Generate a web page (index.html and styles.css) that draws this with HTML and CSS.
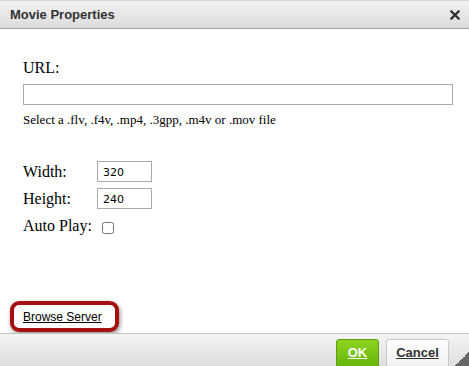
FILE: index.html
```html
<!DOCTYPE html>
<html lang="en">
<head>
    <meta charset="UTF-8">
    <meta name="viewport" content="width=device-width, initial-scale=1.0">
    <title>Movie Properties</title>
    <link rel="stylesheet" href="styles.css">
</head>
<body>
    <div class="dialog">
        <div class="titlebar">
            <span class="title">Movie Properties</span>
            <a href="#" class="close" title="Close">
                <svg width="10" height="10" viewBox="0 0 10 10">
                    <path d="M1.5 1.5 L8.5 8.5 M8.5 1.5 L1.5 8.5" stroke="#333" stroke-width="2.4" stroke-linecap="square"/>
                </svg>
            </a>
        </div>
        <div class="content">
            <div class="url-label">URL:</div>
            <input type="text" class="url-input">
            <div class="hint">Select a .flv, .f4v, .mp4, .3gpp, .m4v or .mov file</div>

            <div class="props">
                <label for="w">Width:</label>
                <div><input type="text" id="w" class="small-input" value="320"></div>
                <label for="h">Height:</label>
                <div><input type="text" id="h" class="small-input" value="240"></div>
                <label for="ap">Auto Play:</label>
                <div><input type="checkbox" id="ap" class="check"></div>
            </div>

            <div class="browse-wrap">
                <span class="highlight"><a href="#" class="browse">Browse Server</a></span>
            </div>
        </div>
        <div class="footer">
            <a href="#" class="btn btn-ok">OK</a>
            <a href="#" class="btn btn-cancel">Cancel</a>
            <span class="grip"></span>
        </div>
    </div>
</body>
</html>
```

FILE: styles.css
```css
html, body {
    margin: 0;
    padding: 0;
    overflow: hidden;
    background-color: #ffffff;
}
.dialog {
    width: 469px;
    height: 366px;
    display: flex;
    flex-direction: column;
    position: relative;
}
.titlebar {
    height: 29px;
    flex: none;
    display: flex;
    align-items: center;
    justify-content: space-between;
    padding: 0 8px 0 10px;
    background: linear-gradient(#f2f2f2, #dcdcdc);
    border-top: 1px solid #d6d6d6;
    border-bottom: 1px solid #a6a6a6;
    box-sizing: border-box;
}
.title {
    font-family: "Liberation Sans", Arial, sans-serif;
    font-weight: bold;
    font-size: 13px;
    color: #333;
}
.close {
    display: flex;
    width: 10px;
    height: 10px;
    margin-right: 1px;
}
.content {
    flex: 1;
    display: flex;
    flex-direction: column;
    padding: 30px 16px 0 23px;
    font-family: "Liberation Serif", "Times New Roman", serif;
    color: #000;
}
.url-label {
    font-size: 16px;
    line-height: 18px;
}
.url-input {
    margin: 7px 0 0 0;
    width: 430px;
    height: 21px;
    box-sizing: border-box;
    border: 1px solid #ababab;
    padding: 2px 4px;
    background: #fff;
}
.hint {
    margin-top: 7px;
    font-size: 13px;
    line-height: 15px;
}
.props {
    margin-top: 31px;
    display: grid;
    grid-template-columns: 74px auto;
    grid-auto-rows: 27px;
    align-items: center;
    font-size: 16px;
}
.props label {
    line-height: 18px;
}
.small-input {
    width: 55px;
    height: 21px;
    box-sizing: border-box;
    border: 1px solid #ababab;
    padding: 1px 5px 0;
    font-family: "DejaVu Sans", Verdana, sans-serif;
    font-size: 11px;
    color: #000;
    margin: 0;
}
.check {
    width: 12px;
    height: 12px;
    margin: 2px 3px 0 5px;
    vertical-align: middle;
}
.browse-wrap {
    margin-top: auto;
    margin-left: -13px;
    margin-bottom: 1px;
}
.highlight {
    display: inline-block;
    padding: 4px 13px 4px 9px;
    border: 4px solid #a50f0f;
    border-radius: 9px;
    box-shadow: 1px 2px 4px rgba(0, 0, 0, 0.45);
    line-height: 14px;
}
.browse {
    font-family: "Liberation Sans", Arial, sans-serif;
    font-size: 12px;
    color: #000;
    text-decoration: underline;
}
.footer {
    height: 33px;
    flex: none;
    box-sizing: border-box;
    border-top: 1px solid #c4c4c4;
    background: linear-gradient(#f4f4f4, #dedede);
    display: flex;
    justify-content: flex-end;
    align-items: flex-start;
    gap: 7px;
    padding: 5px 20px 0 0;
    overflow: hidden;
    position: relative;
}
.btn {
    display: flex;
    align-items: center;
    justify-content: center;
    height: 30px;
    box-sizing: border-box;
    padding-bottom: 4px;
    border-radius: 3px;
    font-family: "Liberation Sans", Arial, sans-serif;
    font-weight: bold;
    font-size: 13px;
    text-decoration: underline;
}
.btn-ok {
    width: 43px;
    background: linear-gradient(#8ed41f, #62b30a);
    border: 1px solid #5fa10d;
    color: #fff;
}
.btn-cancel {
    width: 63px;
    background: linear-gradient(#ffffff, #eeeeee);
    border: 1px solid #c9c9c9;
    color: #333;
}
.grip {
    position: absolute;
    right: 0;
    bottom: 0;
    width: 14px;
    height: 14px;
    background: linear-gradient(135deg, transparent 50%, #666 50%);
}
```
